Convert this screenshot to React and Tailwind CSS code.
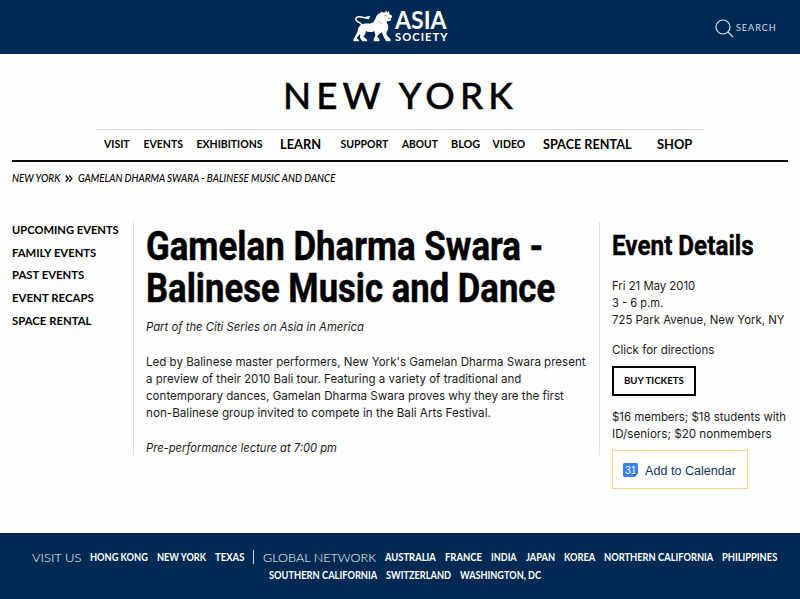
import { useLayoutEffect, useRef, useState } from 'react';

function Line({ w, className = '', children }) {
  const ref = useRef(null);
  const [scale, setScale] = useState(1);
  useLayoutEffect(() => {
    setScale(w / ref.current.offsetWidth);
  }, [w]);
  return (
    <span className={`block shrink-0 whitespace-nowrap ${className}`} style={{ width: w }}>
      <span ref={ref} className="inline-block origin-left align-top" style={{ transform: `scaleX(${scale})` }}>
        {children}
      </span>
    </span>
  );
}

const nav = [
  ['VISIT', 26, 'text-[10.5px]'],
  ['EVENTS', 40, 'text-[10.5px] ml-[13.5px]'],
  ['EXHIBITIONS', 66, 'text-[10.5px] ml-[13px]'],
  ['LEARN', 41, 'text-[12.5px] ml-[17.5px] pt-px'],
  ['SUPPORT', 48, 'text-[10.5px] ml-[19.5px]'],
  ['ABOUT', 36, 'text-[10.5px] ml-[13px]'],
  ['BLOG', 29, 'text-[10.5px] ml-[13px]'],
  ['VIDEO', 33, 'text-[10.5px] ml-[13px]'],
  ['SPACE RENTAL', 89, 'text-[12.5px] ml-[17.5px] pt-px'],
  ['SHOP', 35, 'text-[12.5px] ml-[24.5px] pt-px'],
];

const side = [
  ['UPCOMING EVENTS', 107],
  ['FAMILY EVENTS', 84.5],
  ['PAST EVENTS', 72.5],
  ['EVENT RECAPS', 82],
  ['SPACE RENTAL', 79.5],
];

const visit = [['HONG KONG', 58], ['NEW YORK', 49], ['TEXAS', 29]];
const network = [
  ['AUSTRALIA', 51], ['FRANCE', 37], ['INDIA', 26], ['JAPAN', 29],
  ['KOREA', 31], ['NORTHERN CALIFORNIA', 109], ['PHILIPPINES', 55],
];
const network2 = [['SOUTHERN CALIFORNIA', 108], ['SWITZERLAND', 65], ['WASHINGTON, DC', 81]];

function Lion() {
  return (
    <svg viewBox="36 26 124 102" className="h-[34px] w-[41px]">
      <path
        d="M66 78 C66 68 58 67 52 63 C45 58 46 50 55 49 C66 47 74 56 85 51"
        fill="none" stroke="white" strokeWidth="4.5" strokeLinecap="round"
      />
      <path d="M77 49 L91 47 L87 56 L80 56 Z" fill="white" />
      <path
        d="M62 75 C70 68 82 71 94 69 C102 67 105 58 109 49 C112 42 117 39 123 38 L122 33 L129 36 L136 36 L139 30 L143 36 L148 31 L148 40 L157 46 L157 51 L152 54 L155 58 L150 62 L141 63 C140 70 147 74 146 82 C145 91 138 96 141 104 L153 118 L152 123 L139 123 L131 107 L126 96 L117 102 L112 109 L119 118 L119 123 L102 123 L101 118 L107 105 L103 92 C94 98 85 95 78 92 L76 101 L70 109 L81 118 L82 123 L67 123 L60 112 L61 101 L57 105 L50 113 L57 119 L57 123 L41 123 L40 118 L48 104 L53 94 C54 87 54 81 62 75 Z"
        fill="white"
      />
      <path d="M134 46 L140 46 M145 54 L151 54" fill="none" stroke="#002a54" strokeWidth="1.6" />
      <path d="M114 61 C118 66 122 69 128 69" fill="none" stroke="#002a54" strokeWidth="1" />
    </svg>
  );
}

function Links({ items }) {
  return items.map(([t, w]) => (
    <Line key={t} w={w} className="text-[10.5px] font-bold">{t}</Line>
  ));
}

export default function App() {
  return (
    <div className="flex h-[599px] w-[800px] flex-col overflow-hidden bg-[#fefefe] font-['Lato',sans-serif] text-black">
      <header className="flex h-[54px] shrink-0 bg-[#002a54] text-white">
        <div className="flex pl-[352px] pt-[9px]">
          <Lion />
          <div className="flex flex-col pl-[2px]">
            <Line w={52} className="h-[22px] text-[24px] font-bold leading-[22px]">ASIA</Line>
            <Line w={53} className="mt-[1px] text-[10.5px] font-bold leading-[11px] tracking-[1px]">SOCIETY</Line>
          </div>
        </div>
        <div className="ml-auto flex items-center pr-[23px] pt-[2px] text-[#d5dee8]">
          <svg viewBox="0 0 19 19" className="mr-[2px] h-[19px] w-[19px]" fill="none" stroke="currentColor" strokeWidth="1.2">
            <circle cx="8" cy="8" r="7" />
            <path d="M13 13 L18 18" />
          </svg>
          <Line w={41} className="text-[9.5px] leading-[14px] tracking-[1px]">SEARCH</Line>
        </div>
      </header>

      <div className="flex h-[75px] shrink-0 justify-center pt-[19px]">
        <Line w={235} className="text-[36px] font-medium leading-[44px] tracking-[5px] [-webkit-text-stroke:0.4px_black]">NEW YORK</Line>
      </div>
      <nav className="mx-3 flex h-[33px] shrink-0 border-b-2 border-[#0a0a0a] px-[84px]">
        <div className="flex h-[30px] w-[608px] border-t border-[#dedede] pl-2 leading-[28px]">
          {nav.map(([t, w, c]) => (
            <Line key={t} w={w} className={`font-bold ${c}`}>{t}</Line>
          ))}
        </div>
      </nav>
      <div className="flex h-[60px] shrink-0 pl-3 pt-[9px] text-[10.5px] font-medium italic leading-[15px]">
        <Line w={48}>NEW YORK</Line>
        <svg viewBox="0 0 8 7" className="ml-[5px] mr-[5px] mt-[4px] h-[7px] w-[8px]" fill="none" stroke="black" strokeWidth="1.3">
          <path d="M0.7 0.5 L3.4 3.5 L0.7 6.5 M4.2 0.5 L6.9 3.5 L4.2 6.5" />
        </svg>
        <Line w={257}>GAMELAN DHARMA SWARA - BALINESE MUSIC AND DANCE</Line>
      </div>

      <main className="flex h-[311px] shrink-0 pl-3">
        <aside className="w-[121px]">
          {side.map(([t, w]) => (
            <Line key={t} w={w} className="h-[22.7px] text-[12px] font-bold leading-[15px]">{t}</Line>
          ))}
        </aside>
        <article className="h-[233px] w-[467px] border-x border-[#dedede] pl-3 pt-[4px] font-['Inter',sans-serif] text-[12px] leading-[17.2px] text-[#1a1a1a]">
          <h1 className="font-['Roboto',sans-serif] text-[40px] font-bold leading-[42px] text-black [-webkit-text-stroke:0.5px_black]">
            <Line w={397}>Gamelan Dharma Swara -</Line>
            <Line w={409}>Balinese Music and Dance</Line>
          </h1>
          <Line w={218} className="mt-[8.4px] italic">Part of the Citi Series on Asia in America</Line>
          <div className="mt-[17.2px]">
            <Line w={440}>Led by Balinese master performers, New York's Gamelan Dharma Swara present</Line>
            <Line w={375}>a preview of their 2010 Bali tour. Featuring a variety of traditional and</Line>
            <Line w={418}>contemporary dances, Gamelan Dharma Swara proves why they are the first</Line>
            <Line w={345}>non-Balinese group invited to compete in the Bali Arts Festival.</Line>
          </div>
          <Line w={191} className="mt-[17.2px] italic">Pre-performance lecture at 7:00 pm</Line>
        </article>
        <section className="flex flex-col pl-[12px] pt-[6px] font-['Inter',sans-serif] text-[12px] leading-[17.2px] text-[#1a1a1a]">
          <h2 className="h-[49px] font-['Roboto',sans-serif] text-[28px] font-bold leading-[36px] text-black [-webkit-text-stroke:0.4px_black]">
            <Line w={142}>Event Details</Line>
          </h2>
          <Line w={83}>Fri 21 May 2010</Line>
          <Line w={51}>3 - 6 p.m.</Line>
          <Line w={173}>725 Park Avenue, New York, NY</Line>
          <Line w={102} className="mt-[12.4px]">Click for directions</Line>
          <button className="mt-[7.5px] flex h-[30px] w-[84px] items-center justify-center border-[2.5px] border-black font-['Lato',sans-serif] text-[10px] font-bold text-black">
            <Line w={60}>BUY TICKETS</Line>
          </button>
          <Line w={174} className="mt-[12.5px]">$16 members; $18 students with</Line>
          <Line w={160}>ID/seniors; $20 nonmembers</Line>
          <button className="mt-[7px] flex h-[39px] w-[136px] items-center border border-[#ecd98a] pl-[10px] pt-[2px] font-['Liberation_Sans',sans-serif] text-[#12355f]">
            <svg viewBox="0 0 15 14" className="mr-[7px] h-[14px] w-[15px]">
              <path d="M1 0 H14 L15 1 V10 L11.5 14 H1 L0 13 V1 Z" fill="#3a80ee" />
              <path d="M11.5 14 V10 H15 Z" fill="#1a56b8" />
              <text x="2.2" y="10.8" fill="white" fontSize="10" fontFamily="Liberation Sans, sans-serif">31</text>
            </svg>
            <Line w={91} className="text-[13px]">Add to Calendar</Line>
          </button>
        </section>
      </main>

      <footer className="flex grow flex-col bg-[#002a54] pt-[15px] text-white">
        <div className="flex h-[18px] gap-[9px] pl-[32px] leading-[19px]">
          <Line w={49} className="text-[12.5px] font-light">VISIT US</Line>
          <Links items={visit} />
          <span className="mt-[2px] h-[14px] w-px bg-[#c5d0dc]" />
          <Line w={113} className="text-[12.5px] font-light">GLOBAL NETWORK</Line>
          <Links items={network} />
        </div>
        <div className="flex h-[18px] gap-[9px] pl-[268.5px] leading-[19px]">
          <Links items={network2} />
        </div>
      </footer>
    </div>
  );
}
